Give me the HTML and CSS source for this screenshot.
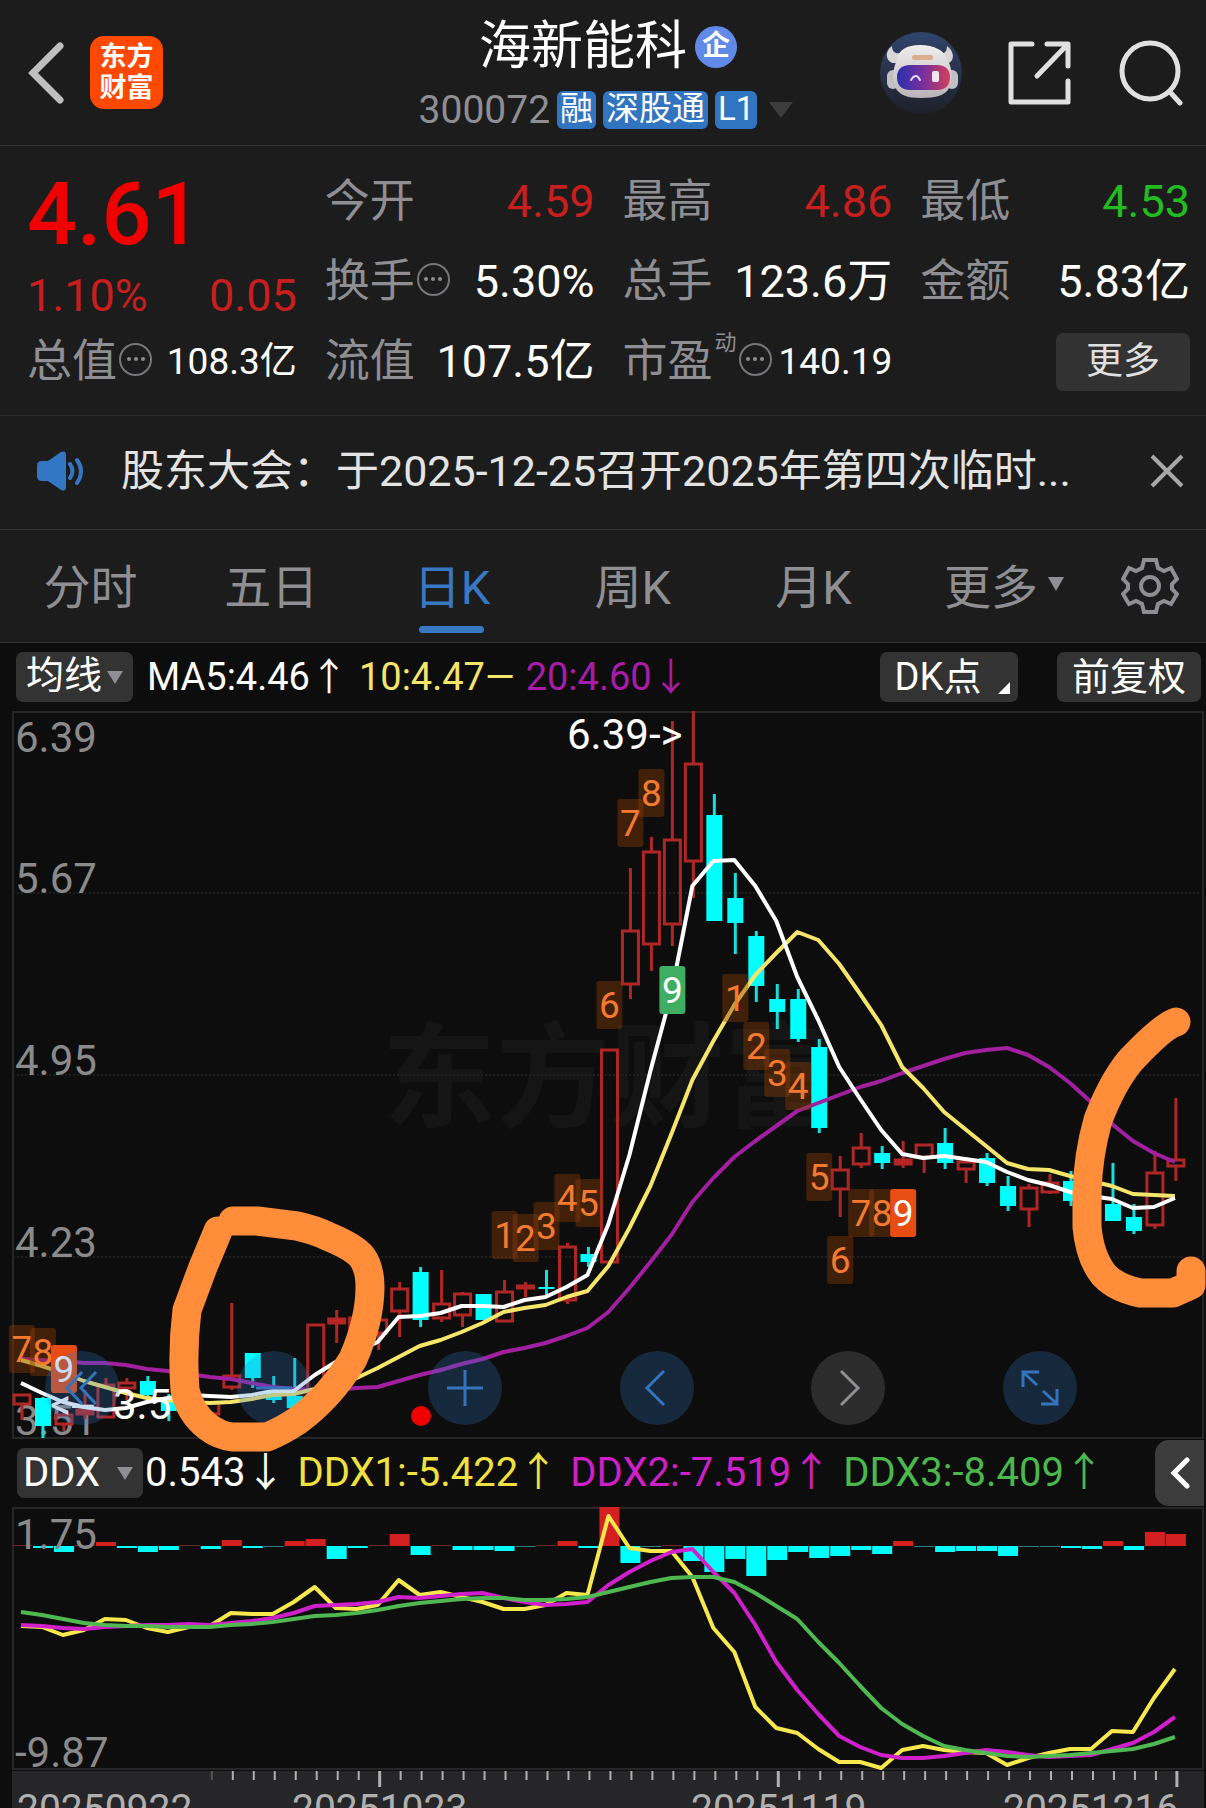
FILE: index.html
```html
<!DOCTYPE html>
<html lang="zh-CN">
<head>
    <meta charset="utf-8">
    <meta name="viewport" content="width=device-width, initial-scale=1">
    <title>海新能科 300072</title>
    <link rel="stylesheet" href="styles.css">
</head>
<body>
    <header class="topbar">
        <div class="topbar-left">
            <button class="icon-btn" aria-label="返回">
                <svg width="36" height="62" viewBox="0 0 36 62"><path d="M32 4 L5 31 L32 58" fill="none" stroke="#bfbfbf" stroke-width="7" stroke-linecap="round"/></svg>
            </button>
            <a class="logo" href="#">东方<br>财富</a>
        </div>
        <div class="stock">
            <h1>海新能科<span class="corp">企</span></h1>
            <div class="stock-sub">
                <span class="code">300072</span>
                <span class="tag">融</span>
                <span class="tag">深股通</span>
                <span class="tag">L1</span>
                <svg class="stock-arrow" width="24" height="16" viewBox="0 0 24 16"><path d="M0 0H24L12 16Z" fill="#3c3c3c"/></svg>
            </div>
        </div>
        <div class="topbar-right">
            <button class="icon-btn" aria-label="助手">
                <svg width="82" height="82" viewBox="0 0 82 82">
                    <defs>
                        <linearGradient id="halo" x1="0" y1="0" x2="0" y2="1"><stop offset="0" stop-color="#31446b"/><stop offset="1" stop-color="#1d2029"/></linearGradient>
                        <linearGradient id="visor" x1="0" y1="0" x2="1" y2="0"><stop offset="0" stop-color="#2a2fb0"/><stop offset=".5" stop-color="#7a2f9c"/><stop offset="1" stop-color="#d2405c"/></linearGradient>
                        <linearGradient id="helmet" x1="0" y1="0" x2="0" y2="1"><stop offset="0" stop-color="#f0eeee"/><stop offset="1" stop-color="#b9b3b8"/></linearGradient>
                    </defs>
                    <circle cx="41" cy="41" r="41" fill="url(#halo)"/>
                    <path d="M12 14C5 19 5 28 12 31L20 31L25 20C17 23 12 21 12 14ZM67 14C74 19 75 28 69 31L61 31L56 20C63 23 67 21 67 14Z" fill="#d9d6d8"/>
                    <rect x="7" y="38" width="12" height="19" rx="6" fill="#c4bfc4"/>
                    <rect x="66" y="38" width="12" height="19" rx="6" fill="#c4bfc4"/>
                    <path d="M40 13C27 13 18 18 17 28C13 36 12 46 15 55C19 63 27 66 41 66C56 66 66 63 69 56C73 46 72 36 68 29C65 18 54 13 40 13Z" fill="url(#helmet)"/>
                    <rect x="32" y="23" width="21" height="5" rx="2" fill="#dcae8c"/>
                    <path d="M30 33H57C66 33 70 38 70 45C70 53 66 58 57 58H30C21 58 17 53 17 45C17 38 21 33 30 33Z" fill="url(#visor)"/>
                    <path d="M31 48Q36 40 40 48" fill="none" stroke="#dcdcff" stroke-width="2" stroke-linecap="round"/>
                    <rect x="52" y="39" width="7" height="11" rx="2" fill="#f3e6ee"/>
                </svg>
            </button>
            <button class="icon-btn" aria-label="分享">
                <svg width="66" height="64" viewBox="0 0 66 64"><g fill="none" stroke="#e0e0e0" stroke-width="5" stroke-linecap="round" stroke-linejoin="round"><path d="M25 3H4V61H61V40"/><path d="M40 3H61V25M60 4L30 35"/></g></svg>
            </button>
            <button class="icon-btn" aria-label="搜索">
                <svg width="66" height="66" viewBox="0 0 66 66"><g fill="none" stroke="#e0e0e0" stroke-width="5" stroke-linecap="round"><circle cx="32" cy="31" r="28"/><path d="M52 52L62 63"/></g></svg>
            </button>
        </div>
    </header>

    <section class="quote">
        <div class="quote-col">
            <div class="price up">4.61</div>
            <div class="change"><span>1.10%</span><span>0.05</span></div>
            <div class="cell"><span class="label">总值<i class="info"></i></span><span class="value small">108.3亿</span></div>
        </div>
        <div class="quote-col">
            <div class="cell"><span class="label">今开</span><span class="value red">4.59</span></div>
            <div class="cell"><span class="label">换手<i class="info"></i></span><span class="value">5.30%</span></div>
            <div class="cell"><span class="label">流值</span><span class="value">107.5亿</span></div>
        </div>
        <div class="quote-col">
            <div class="cell"><span class="label">最高</span><span class="value red">4.86</span></div>
            <div class="cell"><span class="label">总手</span><span class="value">123.6万</span></div>
            <div class="cell"><span class="label">市盈<sup>动</sup><i class="info"></i></span><span class="value small">140.19</span></div>
        </div>
        <div class="quote-col">
            <div class="cell"><span class="label">最低</span><span class="value green">4.53</span></div>
            <div class="cell"><span class="label">金额</span><span class="value">5.83亿</span></div>
            <div class="cell cell-end"><button class="more-btn">更多</button></div>
        </div>
    </section>

    <section class="notice">
        <svg width="48" height="40" viewBox="0 0 48 40"><path d="M0 15Q0 10 5 10H11L24 1Q29 -1 29 4V36Q29 41 24 39L11 30H5Q0 30 0 25Z" fill="#3377c4"/><path d="M33 13Q38 20 33 27M40 9Q48 20 40 32" fill="none" stroke="#3377c4" stroke-width="4" stroke-linecap="round"/></svg>
        <a class="notice-text" href="#">股东大会：于2025-12-25召开2025年第四次临时...</a>
        <button class="icon-btn" aria-label="关闭">
            <svg width="34" height="34" viewBox="0 0 34 34"><path d="M2 2L32 32M32 2L2 32" stroke="#a8a8a8" stroke-width="4"/></svg>
        </button>
    </section>

    <nav class="tabs">
        <button class="tab">分时</button>
        <button class="tab">五日</button>
        <button class="tab active">日K</button>
        <button class="tab">周K</button>
        <button class="tab">月K</button>
        <button class="tab tab-more">更多<svg width="16" height="14" viewBox="0 0 16 14"><path d="M0 0H16L8 14Z" fill="#8e8e93"/></svg></button>
        <button class="gear" aria-label="设置">
            <svg width="58" height="58" viewBox="0 0 58 58"><g fill="none" stroke="#8e8e93" stroke-width="4"><path d="M23 3H35L37 11L43 14L50 11L56 22L51 27V32L56 37L50 47L43 44L37 47L35 55H23L21 47L15 44L8 47L2 37L7 32V27L2 22L8 11L15 14L21 11Z"/><circle cx="29" cy="29" r="9"/></g></svg>
        </button>
    </nav>

    <main class="charts">
        <div class="bar">
            <label class="pick"><select aria-label="主图指标"><option>均线</option></select></label>
            <div class="legend">
                <span>MA5:4.46↑</span>
                <span class="c-ma10">10:4.47—</span>
                <span class="c-ma20">20:4.60↓</span>
            </div>
            <button class="pill corner">DK点</button>
            <button class="pill">前复权</button>
        </div>

        <div class="kline">
            <svg id="kline" class="plot" viewBox="0 711 1206 728"></svg>
            <div class="tools">
                <button class="round" aria-label="最早"><svg width="40" height="40" viewBox="0 0 40 40"><path d="M20 4L5 20L20 36M34 4L19 20L34 36"/></svg></button>
                <button class="round" aria-label="缩小"><svg width="40" height="40" viewBox="0 0 40 40"><path d="M2 20H38"/></svg></button>
                <button class="round" aria-label="放大"><svg width="40" height="40" viewBox="0 0 40 40"><path d="M2 20H38M20 2V38"/></svg></button>
                <button class="round" aria-label="左移"><svg width="40" height="40" viewBox="0 0 40 40"><path d="M27 3L10 20L27 37"/></svg></button>
                <button class="round off" aria-label="右移"><svg width="40" height="40" viewBox="0 0 40 40"><path d="M13 3L30 20L13 37"/></svg></button>
                <button class="round" aria-label="全屏"><svg width="40" height="40" viewBox="0 0 40 40"><path d="M3 19V4H19M4 5L17 17M37 21V36H21M36 35L23 23"/></svg></button>
            </div>
            <svg class="marks" viewBox="0 711 1206 728">
                <circle cx="421" cy="1416" r="10" fill="#f00000"/>
                <g fill="none" stroke="#ff8d3a" stroke-width="29" stroke-linecap="round" stroke-linejoin="round">
                    <path d="M233 1221H257L297 1226Q315 1230 327 1236Q354 1247 362 1257Q370 1268 370 1287Q370 1320 353 1359Q330 1397 297 1421Q282 1431 267 1437H233Q220 1436 208 1427Q190 1413 185 1390Q182 1350 187 1310L203 1267L218 1231"/>
                    <path d="M1176 1022Q1163 1026 1130 1061Q1112 1083 1098 1120Q1088 1155 1087 1193V1227Q1090 1258 1104 1275Q1116 1288 1140 1293H1173L1191 1285V1271"/>
                </g>
            </svg>
        </div>

        <div class="bar bar-ddx">
            <label class="pick pick-ddx"><select aria-label="副图指标"><option>DDX</option></select></label>
            <div class="legend legend-ddx">
                <span>0.543↓</span>
                <span class="c-ddx1">DDX1:-5.422↑</span>
                <span class="c-ddx2">DDX2:-7.519↑</span>
                <span class="c-ddx3">DDX3:-8.409↑</span>
            </div>
            <button class="drawer" aria-label="展开"><svg width="20" height="32" viewBox="0 0 20 32"><path d="M17 3L4 16L17 29" fill="none" stroke="#fff" stroke-width="5" stroke-linecap="round"/></svg></button>
        </div>

        <svg id="ddx" class="plot" viewBox="0 1507 1206 263"></svg>
        <svg id="axis" class="plot" viewBox="0 1770 1206 38"></svg>
    </main>
    <script src="script.js"></script>
</body>
</html>
```

FILE: styles.css
```css
* {
    box-sizing: border-box;
}
body {
    margin: 0;
    background: #0d0d0d;
    color: #fff;
    font-family: Roboto, "Noto Sans CJK SC", sans-serif;
}
button, select {
    border: none;
    margin: 0;
    padding: 0;
    background: none;
    color: inherit;
    font-family: inherit;
}
a {
    color: inherit;
    text-decoration: none;
}
svg {
    display: block;
}

/* top bar */
.topbar {
    display: grid;
    grid-template-columns: 1fr auto 1fr;
    align-items: center;
    height: 146px;
    padding: 0 22px 0 28px;
    background: #1c1c1c;
    border-bottom: 1px solid #333;
}
.topbar-left, .topbar-right {
    display: flex;
    align-items: center;
}
.topbar-left {
    gap: 26px;
}
.topbar-right {
    justify-content: flex-end;
    gap: 45px;
}
.logo {
    width: 73px;
    height: 73px;
    padding-top: 6px;
    border-radius: 14px;
    background: #ff4800;
    font-size: 27px;
    line-height: 31px;
    font-weight: bold;
    text-align: center;
}
.stock {
    padding-top: 9px;
}
.stock h1 {
    display: flex;
    align-items: center;
    justify-content: center;
    gap: 8px;
    margin: 0 0 0 4px;
    font-size: 52px;
    line-height: 66px;
    font-weight: normal;
}
.corp {
    width: 42px;
    height: 42px;
    border-radius: 50%;
    background: #6189e8;
    font-size: 28px;
    line-height: 40px;
    font-weight: bold;
    text-align: center;
}
.stock-sub {
    display: flex;
    align-items: center;
    gap: 7px;
    height: 60px;
}
.code {
    color: #8e8e93;
    font-size: 39px;
}
.tag {
    height: 38px;
    padding: 0 3px;
    border-radius: 6px;
    background: #3174c0;
    font-size: 33px;
    line-height: 36px;
}
.stock-arrow {
    margin-left: 5px;
}

/* quote numbers */
.quote {
    display: grid;
    grid-template-columns: repeat(4, 1fr);
    gap: 28px;
    padding: 16px 16px 13px 27px;
    background: #1c1c1c;
    border-bottom: 1px solid #292929;
}
.price {
    height: 106px;
    color: #f20000;
    font-size: 88px;
    line-height: 104px;
    font-weight: 500;
}
.change {
    display: flex;
    justify-content: space-between;
    height: 54px;
    color: #c81e1e;
    font-size: 45px;
    line-height: 56px;
}
.cell {
    display: flex;
    align-items: center;
    justify-content: space-between;
    height: 80px;
    line-height: 78px;
    white-space: nowrap;
}
.cell-end {
    justify-content: flex-end;
}
.label {
    display: flex;
    align-items: center;
    color: #8e8e93;
    font-size: 45px;
}
.label sup {
    align-self: flex-start;
    margin-left: 2px;
    font-size: 22px;
    line-height: 40px;
}
.info {
    display: flex;
    align-items: center;
    justify-content: center;
    width: 33px;
    height: 33px;
    margin: 0 0 6px 2px;
    border: 2px solid #77777b;
    border-radius: 50%;
}
.info::before {
    content: "";
    width: 4px;
    height: 4px;
    border-radius: 50%;
    background: #8e8e93;
    box-shadow: -7px 0 #8e8e93, 7px 0 #8e8e93;
}
.value {
    font-size: 45px;
}
.small {
    font-size: 37px;
}
.red {
    color: #c81e1e;
}
.green {
    color: #22bb22;
}
.more-btn {
    width: 134px;
    height: 58px;
    border-radius: 7px;
    background: #323232;
    color: #e0e0e0;
    font-size: 37px;
    line-height: 54px;
}

/* notice */
.notice {
    display: flex;
    align-items: center;
    height: 114px;
    padding: 0 22px 4px 37px;
    background: #1c1c1c;
    border-bottom: 1px solid #333;
}
.notice-text {
    flex: 1;
    margin-left: 36px;
    color: #e3e3e3;
    font-size: 43px;
    line-height: 60px;
    white-space: nowrap;
    overflow: hidden;
}

/* period tabs */
.tabs {
    display: flex;
    height: 113px;
    background: #1c1c1c;
    border-bottom: 1px solid #333;
}
.tab {
    position: relative;
    flex: 1;
    display: flex;
    align-items: center;
    justify-content: center;
    gap: 10px;
    padding-bottom: 5px;
    color: #8e8e93;
    font-size: 47px;
}
.active {
    color: #3878c2;
}
.active::after {
    content: "";
    position: absolute;
    bottom: 9px;
    width: 65px;
    height: 7px;
    border-radius: 4px;
    background: #3878c2;
}
.tab-more {
    flex: none;
    width: 190px;
    padding-left: 10px;
}
.gear {
    display: flex;
    align-items: center;
    justify-content: center;
    width: 112px;
}

/* indicator bars */
.bar {
    display: flex;
    align-items: center;
    height: 68px;
    padding: 0 5px 0 16px;
    white-space: nowrap;
}
.bar-ddx {
    padding: 0 2px 0 17px;
}
.pick {
    position: relative;
    width: 117px;
    height: 50px;
    border-radius: 7px;
    background: #333;
}
.pick::after {
    content: "";
    position: absolute;
    right: 10px;
    top: 19px;
    border: 8px solid transparent;
    border-top: 13px solid #8e8e93;
    border-bottom: none;
    pointer-events: none;
}
.pick select {
    appearance: none;
    width: 100%;
    height: 50px;
    padding: 0 0 4px 10px;
    font-size: 38px;
}
.pick-ddx {
    width: 126px;
}
.pick-ddx select {
    padding: 0 0 2px 6px;
    font-size: 40px;
}
.legend {
    flex: 1;
    display: flex;
    align-items: baseline;
    gap: 11px;
    padding-left: 14px;
    font-size: 38px;
    line-height: 46px;
}
.legend-ddx {
    gap: 12px;
    padding-left: 2px;
    font-size: 40px;
}
.c-ma10 { color: #f5e56b; }
.c-ma20 { color: #a81ca8; }
.c-ddx1 { color: #f0e040; }
.c-ddx2 { color: #cf20c8; }
.c-ddx3 { color: #4cb84c; }
.pill {
    position: relative;
    width: 144px;
    height: 50px;
    border-radius: 7px;
    background: #333;
    font-size: 38px;
    line-height: 46px;
}
.corner {
    width: 138px;
    margin-right: 39px;
    padding-right: 22px;
}
.corner::after {
    content: "";
    position: absolute;
    right: 8px;
    bottom: 8px;
    border-left: 12px solid transparent;
    border-bottom: 12px solid #fff;
}
.drawer {
    display: flex;
    align-items: center;
    justify-content: center;
    width: 49px;
    height: 66px;
    border-radius: 14px 0 0 14px;
    background: #3c3c3c;
}

/* charts */
.plot {
    width: 100%;
    height: auto;
}
.kline {
    position: relative;
}
.marks {
    position: absolute;
    z-index: 1;
    top: 0;
    left: 0;
    width: 100%;
    overflow: visible;
    pointer-events: none;
}
.tools {
    position: absolute;
    left: 45px;
    right: 129px;
    bottom: 14px;
    display: flex;
    justify-content: space-between;
}
.round {
    display: flex;
    align-items: center;
    justify-content: center;
    width: 74px;
    height: 74px;
    border-radius: 50%;
    background: rgba(51, 119, 196, .26);
}
.round path {
    fill: none;
    stroke: #3574bd;
    stroke-width: 3;
}
.off {
    background: #2c2c2c;
}
.off path {
    stroke: #8e8e93;
}
.grid {
    stroke: #1e1e1e;
    stroke-width: 2;
    stroke-dasharray: 2 2;
}
.frame {
    fill: none;
    stroke: #262626;
    stroke-width: 2;
}
.scale {
    fill: #8a8a8a;
    font-size: 42px;
}
.note {
    fill: #fff;
    font-size: 42px;
}
.watermark {
    fill: #151515;
    font-size: 114px;
    font-weight: bold;
}
.badge {
    fill: #f57a30;
    font-size: 37px;
    text-anchor: middle;
}
.date {
    fill: #b0b0b0;
    font-size: 39px;
}
```

FILE: script.js
```js
var STEP = 20.98;
function px(i) { return 22 + STEP * i; }

// r = up (hollow), c = down (filled): [type, high, top, bottom, low]
var candles = [
    ['r',1394,1395,1404,1420],['c',1397,1398,1426,1438],['r',1412,1415,1424,1431],['r',1390,1410,1414,1419],
    ['r',1378,1385,1417,1417],['r',1378,1383,1388,1400],['c',1376,1381,1395,1403],['c',1394,1402,1411,1421],
    ['r',1400,1405,1412,1414],['r',1403,1403,1414,1414],['r',1303,1376,1387,1390],['c',1353,1353,1378,1388],
    ['c',1376,1390,1400,1403],['c',1358,1396,1408,1408],['r',1324,1325,1398,1398],['r',1310,1319,1323,1343],
    ['r',1310,1318,1330,1340],['r',1319,1320,1333,1350],['r',1282,1289,1311,1337],['c',1267,1272,1320,1327],
    ['r',1270,1304,1318,1322],['r',1292,1294,1315,1327],['c',1294,1294,1320,1320],['r',1280,1292,1321,1321],
    ['r',1282,1286,1288,1297],['c',1270,1287,1289,1295],['r',1243,1247,1300,1304],['c',1247,1254,1262,1267],
    ['r',1049,1050,1262,1262],['r',868,931,984,999],['r',837,852,944,971],['r',721,840,924,946],
    ['r',711,764,861,898],['c',794,815,921,921],['c',873,898,923,954],['c',931,936,986,1002],
    ['c',984,999,1012,1029],['c',989,999,1039,1042],['c',1039,1047,1128,1133],['r',1156,1170,1189,1217],
    ['r',1133,1148,1164,1168],['c',1146,1153,1163,1169],['r',1141,1160,1164,1168],['r',1144,1145,1157,1173],
    ['c',1128,1143,1163,1169],['r',1157,1162,1169,1183],['c',1153,1158,1183,1186],['c',1176,1186,1206,1211],
    ['r',1184,1188,1209,1227],['r',1174,1183,1192,1194],['c',1171,1181,1201,1206],['r',1180,1190,1200,1210],
    ['c',1163,1204,1221,1221],['c',1204,1217,1231,1234],['r',1151,1173,1225,1229],['r',1098,1160,1166,1181]
];
var ma5 = [1383,1393,1402,1407,1410,1408,1402,1398,1395,1396,1397,1395,1391,1391,1375,1362,1352,1342,1317,1316,1313,1306,1306,1307,1300,1297,1287,1275,1224,1155,1071,993,886,861,860,886,921,977,1020,1067,1099,1130,1154,1158,1156,1159,1162,1172,1180,1185,1192,1196,1199,1208,1207,1198];
var ma10 = [1360,1366,1373,1381,1387,1393,1398,1400,1402,1403,1402,1399,1395,1394,1389,1384,1378,1368,1357,1346,1340,1332,1323,1312,1308,1305,1297,1291,1266,1228,1186,1134,1080,1041,1005,975,953,932,940,964,994,1025,1067,1088,1112,1129,1146,1163,1169,1170,1176,1181,1186,1194,1195,1196];
var ma20 = [1359,1360,1361,1363,1363,1365,1369,1371,1374,1377,1379,1383,1387,1389,1390,1390,1388,1387,1381,1375,1370,1364,1359,1352,1348,1343,1336,1328,1312,1288,1262,1235,1202,1178,1157,1141,1126,1111,1103,1095,1087,1081,1073,1066,1059,1053,1050,1048,1055,1067,1083,1102,1124,1141,1153,1162];

// nine-turn counts: [candle, digit, top, highlight]
var counts = [
    [0,7,1325],[1,8,1328],[2,9,1345,'#e84e14'],[23,1,1211],[24,2,1214],[25,3,1202],[26,4,1174],[27,5,1179],
    [28,6,981],[29,7,799],[30,8,769],[31,9,966,'#3fae63'],[34,1,974],[35,2,1022],[36,3,1049],[37,4,1062],
    [38,5,1153],[39,6,1236],[40,7,1189],[41,8,1189],[42,9,1189,'#e84e14']
];

var ddx = [1,-2,-6,1,4,-2,-6,-4,1,-3,6,-2,-1,5,7,-13,-2,1,12,-9,1,-4,-4,-5,-1,1,5,-2,39,-17,-1,1,-15,-26,-13,-30,-14,-6,-12,-10,-4,-8,5,-1,-6,-5,-5,-10,-1,-1,-2,-3,5,-4,14,12];
var ddx1 = [1626,1627,1635,1630,1619,1620,1628,1632,1627,1626,1613,1614,1614,1602,1587,1608,1609,1605,1580,1595,1592,1597,1602,1609,1609,1605,1593,1595,1516,1548,1551,1551,1577,1628,1652,1707,1728,1733,1749,1762,1762,1768,1750,1746,1750,1752,1753,1765,1758,1753,1749,1749,1731,1732,1698,1669];
var ddx2 = [1625,1626,1628,1629,1627,1626,1625,1625,1624,1625,1623,1621,1618,1613,1606,1605,1604,1602,1597,1598,1596,1594,1593,1598,1602,1605,1604,1602,1585,1572,1561,1552,1549,1572,1593,1625,1662,1690,1714,1736,1747,1755,1758,1758,1756,1753,1750,1752,1755,1757,1756,1755,1749,1743,1732,1717];
var ddx3 = [1612,1615,1619,1623,1625,1626,1626,1627,1627,1627,1625,1624,1622,1619,1616,1615,1613,1610,1606,1603,1601,1599,1598,1598,1600,1600,1599,1597,1592,1587,1582,1578,1577,1577,1582,1593,1606,1619,1642,1663,1686,1708,1724,1736,1746,1750,1753,1756,1757,1756,1755,1753,1751,1749,1744,1737];

function rect(x, y, w, h, fill, more) {
    return '<rect x="' + x + '" y="' + y + '" width="' + w + '" height="' + h + '" fill="' + fill + '" ' + (more || '') + '/>';
}
function line(x1, y1, x2, y2, more) {
    return '<line x1="' + x1 + '" y1="' + y1 + '" x2="' + x2 + '" y2="' + y2 + '" ' + more + '/>';
}
function text(x, y, cls, s, more) {
    return '<text x="' + x + '" y="' + y + '" class="' + cls + '" ' + (more || '') + '>' + s + '</text>';
}
function curve(ys, color) {
    var pts = ys.map(function (y, i) { return (px(i) - 1) + ',' + y; }).join(' ');
    return '<polyline points="' + pts + '" fill="none" stroke="' + color + '" stroke-width="4" stroke-linejoin="round"/>';
}

function draw_kline() {
    var out = text(382, 1118, 'watermark', '东方财富');
    out += '<rect class="frame" x="13" y="712" width="1190" height="726"/>';
    [893, 1075, 1257].forEach(function (y) {
        out += line(13, y, 1203, y, 'class="grid"');
    });
    [['6.39', 752], ['5.67', 893], ['4.95', 1075], ['4.23', 1257], ['3.51', 1435]].forEach(function (s) {
        out += text(15, s[1], 'scale', s[0]);
    });
    candles.forEach(function (c, i) {
        var x = px(i), h = c[3] - c[2];
        if (c[0] == 'c') {
            out += line(x, c[1], x, c[4], 'stroke="#19dede" stroke-width="3"');
            out += rect(x - 8, c[2], 16, h, '#00ffff');
        } else {
            var s = 'stroke="#b02626" stroke-width="3"';
            out += line(x, c[1], x, c[2], s) + line(x, c[3], x, c[4], s);
            out += rect(x - 8, c[2], 16, h, h > 4 ? 'none' : '#d02020', s);
        }
    });
    out += curve(ma20, '#a020a0') + curve(ma10, '#f5e56b') + curve(ma5, '#fff');
    counts.forEach(function (n) {
        var x = px(n[0]);
        out += rect(x - 13, n[2], 26, 48, n[3] || '#8a3c06', 'rx="3"' + (n[3] ? '' : ' opacity=".42"'));
        out += text(x, n[2] + 37, 'badge', n[1], n[3] ? 'style="fill:#fff"' : '');
    });
    out += text(567, 749, 'note', '6.39-&gt;');
    out += text(50, 1419, 'note', '&lt;--');
    out += text(113, 1419, 'note', '3.51');
    document.getElementById('kline').innerHTML = out;
}

function draw_ddx() {
    var out = '<rect class="frame" x="13" y="1508" width="1190" height="261"/>';
    ddx.forEach(function (v, i) {
        var h = Math.abs(v);
        out += rect(px(i) - 10, v > 0 ? 1546 - h : 1546, 20, h, v > 0 ? (h > 1 ? '#d42020' : '#6b2626') : (h > 1 ? '#00ffff' : '#2f8080'));
    });
    out += curve(ddx1, '#f7e84e') + curve(ddx2, '#d020cc') + curve(ddx3, '#50b850');
    out += text(15, 1549, 'scale', '1.75') + text(15, 1767, 'scale', '-9.87');
    document.getElementById('ddx').innerHTML = out;
}

function draw_axis() {
    var out = rect(12, 1771, 1192, 37, '#262628');
    for (var i = 9; i <= 55; ++i) {
        var big = i == 17 || i == 36 || i == 55;
        out += line(px(i) + 1, 1771, px(i) + 1, big ? 1787 : 1780, 'stroke="' + (i == 9 ? '#555' : '#b0b0b0') + '" stroke-width="' + (big ? 3 : 2) + '"');
    }
    [['20250922', 17], ['20251023', 292], ['20251119', 691], ['20251216', 1003]].forEach(function (d) {
        out += text(d[1], 1822, 'date', d[0]);
    });
    document.getElementById('axis').innerHTML = out;
}

draw_kline();
draw_ddx();
draw_axis();
```
